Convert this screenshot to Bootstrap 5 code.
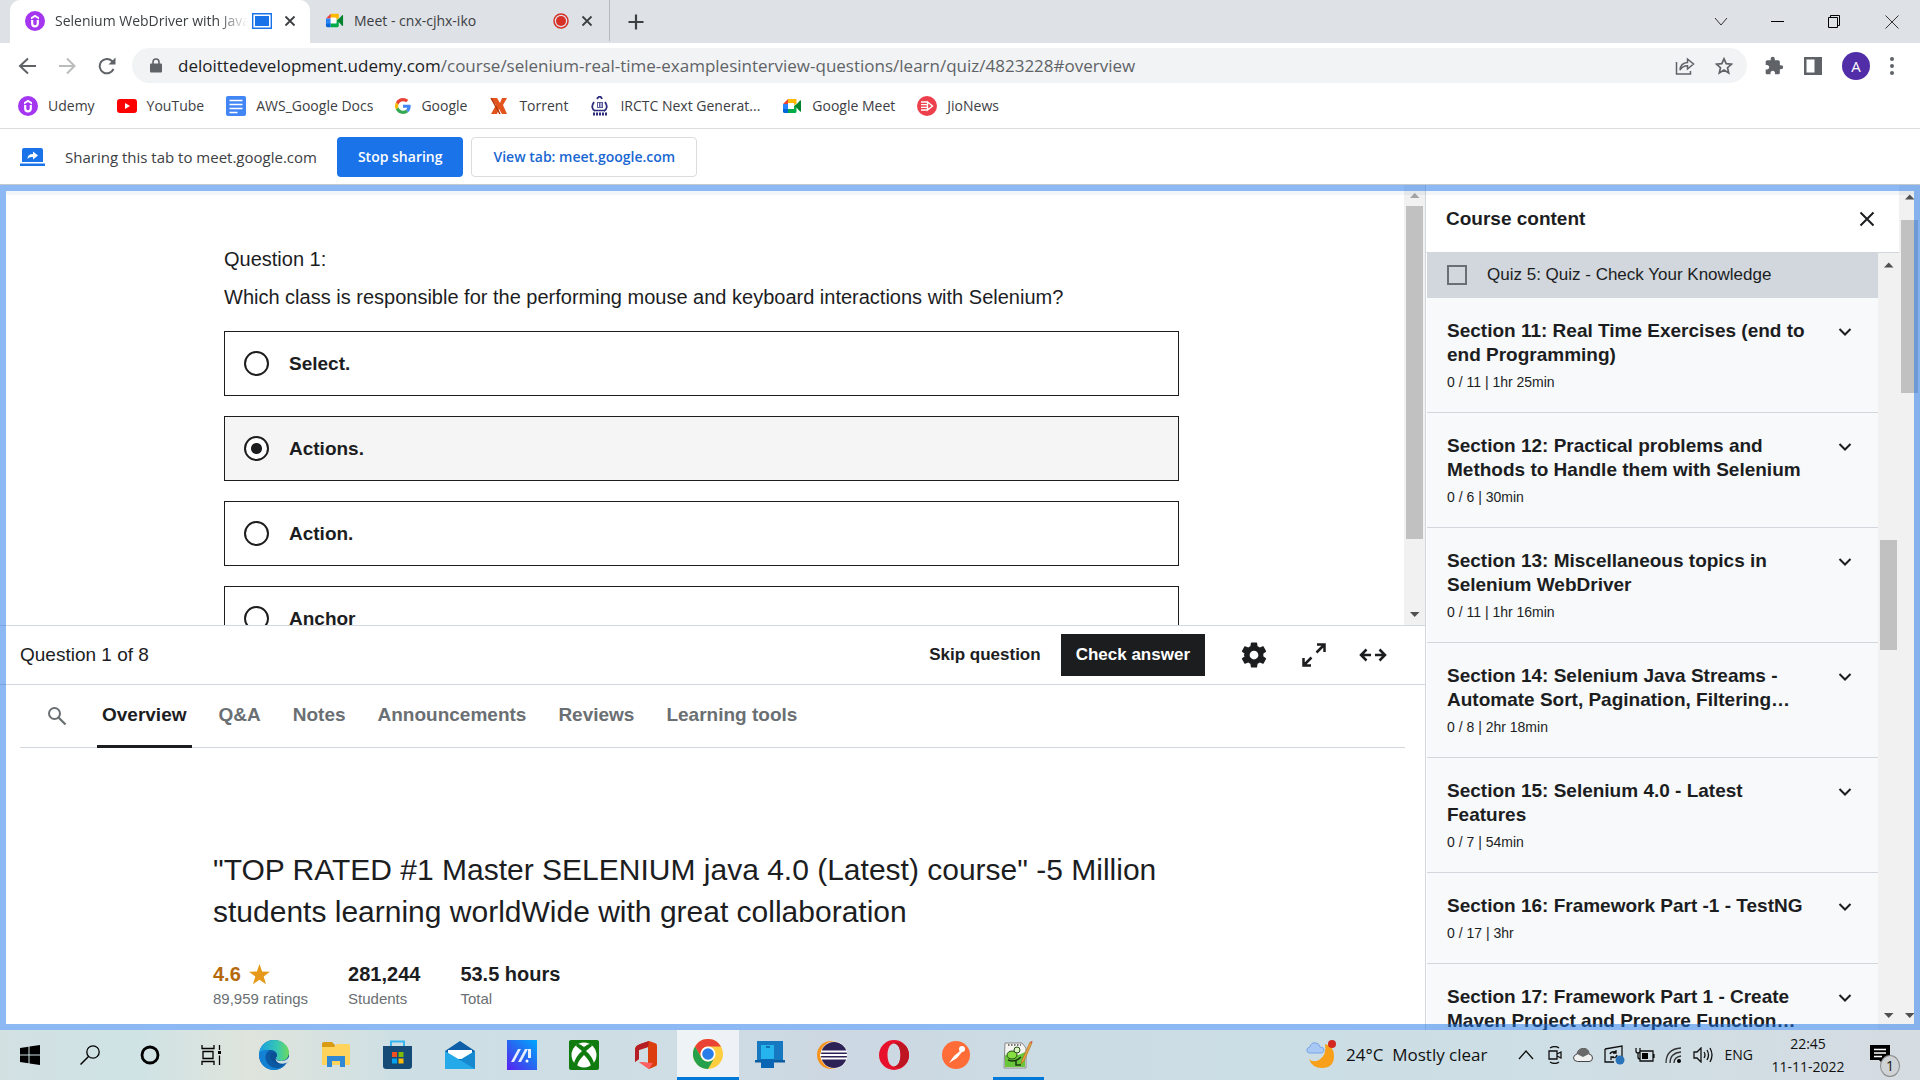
<!DOCTYPE html>
<html lang="en">
<head>
<meta charset="utf-8">
<meta name="viewport" content="width=device-width, initial-scale=1">
<title>Selenium WebDriver with Java</title>
<link href="https://cdn.jsdelivr.net/npm/bootstrap@5.3.0/dist/css/bootstrap.min.css" rel="stylesheet">
<style>
  :root { --ink:#1c1d1f; --rule:#d1d7dc; --ui:"Open Sans","Noto Sans",sans-serif; --page:"Liberation Sans",Arial,sans-serif; }
  body { font-family:var(--ui); font-size:14px; color:#3c4043; line-height:20px; overflow:hidden; }
  svg { display:block; flex-shrink:0; }
  button { border:0; background:none; padding:0; color:inherit; }
  a { color:inherit; text-decoration:none; }

  /* browser chrome */
  .tabstrip { background:#dee1e6; height:43px; }
  .browser-tab { height:43px; padding:0 14px 2px 15px; }
  .browser-tab.current { background:#fff; border-radius:10px 10px 0 0; width:300px; margin-left:10px; }
  .browser-tab.other { width:318px; padding-right:18px; }
  .tab-title { white-space:nowrap; overflow:hidden; margin-left:10px; }
  .tab-title.faded { -webkit-mask-image:linear-gradient(90deg,#000 84%,transparent); mask-image:linear-gradient(90deg,#000 84%,transparent); }
  .win-btn { width:57px; height:38px; display:flex; align-items:center; justify-content:center; }
  .toolbar { height:45px; padding-left:18px; padding-right:26px; }
  .nav-arrows { gap:22px; }
  .omnibox { background:#f1f3f4; border-radius:18px; height:35px; padding:0 14px; margin-right:17px; font-size:17px; color:#202124; }
  .omnibox .path { color:#5f6368; }
  .omni-actions, .ext-actions { gap:20px; }
  .avatar { width:28px; height:28px; border-radius:50%; background:#512da8; color:#fff; font-size:15px; }
  .bookmarks { height:41px; padding-left:18px; gap:22px; padding-bottom:4px; border-bottom:1px solid #dadce0; }
  .bookmarks a { display:flex; align-items:center; gap:10px; }
  .sharebar { height:56px; padding-left:20px; border-bottom:1px solid #c5c8cc; }
  .share-text { font-size:15px; margin:0 20px; }
  .share-btn { height:40px; padding:0 21px; border-radius:4px; font-weight:600; }
  .share-btn.fill { background:#1a73e8; color:#fff; }
  .share-btn.line { border:1px solid #dadce0; color:#1967d2; }

  /* shared page */
  .viewport-area { font-family:var(--page); font-size:19px; line-height:24px; color:var(--ink); background:#fff; }
  .share-frame { inset:0; border:6px solid rgba(26,115,232,.5); box-shadow:inset 0 6px 0 -2px rgba(60,80,120,.06); pointer-events:none; z-index:5; }
  .bar { width:21px; background:#f1f1f1; flex-shrink:0; }
  .thumb { width:17px; background:#c1c1c1; }
  .quiz { height:440px; }
  .quiz-inner { width:955px; margin-left:224px; padding-top:62px; }
  .prompt { font-size:20px; }
  .prompt p { margin:14px 0 22px; }
  .option { height:65px; border:1px solid var(--ink); padding-left:19px; gap:20px; margin-bottom:20px; font-weight:700; flex-shrink:0; }
  .option.picked { background:#f5f5f5; }
  .option input { appearance:none; width:25px; height:25px; border:2px solid var(--ink); border-radius:50%; background:#fff; margin:0; }
  .option input:checked { background:radial-gradient(circle,var(--ink) 5px,#fff 6px); }
  .quizbar { height:60px; border-top:1px solid var(--rule); border-bottom:1px solid var(--rule); padding-left:20px; padding-right:38px; }
  .quizbar button { font-size:17px; font-weight:700; }
  .check-btn { background:var(--ink); color:#fff; height:42px; padding:0 15px; margin:0 26px 0 20px; }
  .course-tabs { margin:0 20px; height:63px; border-bottom:1px solid var(--rule); padding-left:27px; color:#6a6f73; font-weight:700; gap:22px; }
  .course-tabs .tab-link { padding:0 5px; height:63px; display:flex; align-items:center; border-bottom:3px solid transparent; }
  .course-tabs .tab-link.active { color:var(--ink); border-color:var(--ink); }
  .about { margin-left:213px; padding-top:101px; }
  .about h1 { font-size:30px; line-height:42px; font-weight:400; margin-bottom:29px; }
  .stats { gap:40px; }
  .stat-value { font-size:20px; font-weight:700; }
  .stat-label { font-size:15px; color:#6a6f73; line-height:26px; }
  .rating { color:#b4690e; }

  .sidebar { width:474px; border-left:1px solid var(--rule); flex-shrink:0; }
  .side-head { height:68px; padding:0 24px 0 20px; border-bottom:1px solid var(--rule); font-weight:700; }
  .side-list { background:#f7f9fa; overflow:hidden; margin-left:1px; }
  .quiz-row { background:#d1d7dc; height:45px; padding:0 0 2px 20px; font-size:17px; gap:20px; }
  .quiz-row input { appearance:none; width:20px; height:20px; border:2px solid #6a6f73; margin:0; }
  .section-item { padding:21px 26px 19px 20px; border-bottom:1px solid var(--rule); }
  .section-item h2 { font-size:19px; line-height:24px; font-weight:700; margin:0 0 4px; white-space:nowrap; }
  .section-item p { font-size:14px; line-height:22px; margin:0; }

  /* taskbar */
  .taskbar { height:50px; background:linear-gradient(90deg,#d2e0e2 0,#cfe3e5 7%,#dfe4dc 13%,#cddfe4 21%,#cfdde5 35%,#ccd7e2 43%,#cbdce4 55%,#cddfe5 78%,#d5dce2 100%); color:#111; font-size:14px; }
  .tb { width:62px; height:50px; display:flex; align-items:center; justify-content:center; flex-shrink:0; }
  .tb.sys { width:60px; }
  .tb.sys:nth-child(4) { width:63px; }
  .tb.open { background:rgba(255,255,255,.65); border-bottom:3px solid #0078d7; }
  .tb.running { background:linear-gradient(#0078d7,#0078d7) bottom/51px 3px no-repeat; }
  .weather { font-size:17px; margin-right:30px; }
  .tray { gap:10px; }
  .clock { font-size:14px; line-height:23px; width:78px; text-align:center; margin:0 15px 0 16px; }
  .notice { width:38px; margin-right:20px; }
  .notice .count { width:20px; height:22px; border-radius:50%; border:1px solid #888; background:#cfd3d6; right:0; bottom:-12px; line-height:20px; text-align:center; }
</style>
</head>
<body class="vh-100 d-flex flex-column bg-white">
<svg width="0" height="0" class="position-absolute" aria-hidden="true">
  <symbol id="udemy" viewBox="0 0 20 20"><circle cx="10" cy="10" r="10" fill="#a435f0"/><path d="M6 6.200 10 3.800l4 2.400v2.300L10 6 6 8.500z" fill="#fff"/><path d="M7.200 9v3.500c0 3.700 5.600 3.700 5.600 0V9" fill="none" stroke="#fff" stroke-width="2.200"/></symbol>
  <symbol id="meet" viewBox="0 0 20 20"><path d="M6 3h8.500v5L10 10V7H6z" fill="#ffba00"/><path d="M1 8 6 3v5z" fill="#ea4335"/><path d="M1 8h5v5H1z" fill="#2684fc"/><path d="M1 13h5v4H2.500Q1 17 1 15.500z" fill="#0066da"/><path d="M6 13h6v-3l2.500-2v7.500q0 1.500-1.500 1.500H6z" fill="#00ac47"/><path d="m13 10 5-5.500q1-.7 1 .5v10q0 1.200-1 .5z" fill="#00832d"/><path d="M6 7h6v6H6z" fill="#fff"/></symbol>
  <symbol id="close" viewBox="0 0 12 12"><path d="m1.500 1.500 9 9m0-9-9 9" stroke="#3c4043" stroke-width="1.800"/></symbol>
  <symbol id="up" viewBox="0 0 21 21"><path d="M6 13h9.500L10.700 8z" fill="currentColor"/></symbol>
  <symbol id="down" viewBox="0 0 21 21"><path d="M6 8h9.500l-4.800 5z" fill="currentColor"/></symbol>
  <symbol id="chev" viewBox="0 0 14 10"><path d="m1.500 2 5.500 5.500L12.500 2" fill="none" stroke="#1c1d1f" stroke-width="2"/></symbol>
</svg>

<header class="flex-shrink-0">
  <div class="tabstrip d-flex align-items-center">
    <div class="browser-tab current d-flex align-items-center">
      <svg width="20" height="20"><use href="#udemy"/></svg>
      <span class="tab-title faded flex-fill">Selenium WebDriver with Java</span>
      <svg class="ms-1" width="20" height="16"><path d="M.7.700h18.600v14.600H.7z" fill="#fff" stroke="#1a73e8" stroke-width="1.400"/><path d="M3 3h14v10H3z" fill="#1a73e8"/></svg>
      <button class="ms-2 ps-1" aria-label="Close tab"><svg width="12" height="12"><use href="#close"/></svg></button>
    </div>
    <div class="browser-tab other d-flex align-items-center">
      <svg width="19" height="19"><use href="#meet"/></svg>
      <span class="tab-title flex-fill">Meet - cnx-cjhx-iko</span>
      <svg width="16" height="16"><circle cx="8" cy="8" r="7" fill="none" stroke="#d93025" stroke-width="1.500"/><circle cx="8" cy="8" r="5" fill="#d93025"/></svg>
      <button class="ms-2 ps-1 me-2" aria-label="Close tab"><svg width="12" height="12"><use href="#close"/></svg></button>
      <span class="vr ms-2"></span>
    </div>
    <button aria-label="New tab"><svg width="16" height="16"><path d="M8 .5v15M.5 8h15" stroke="#3c4043" stroke-width="2.200"/></svg></button>
    <div class="d-flex ms-auto">
      <button class="win-btn" aria-label="Search tabs"><svg width="14" height="10"><path d="m1 1 6 7 6-7" fill="none" stroke="#333"/></svg></button>
      <button class="win-btn" aria-label="Minimize"><svg width="13" height="3"><path d="M0 1.500h13" stroke="#000"/></svg></button>
      <button class="win-btn" aria-label="Restore"><svg width="15" height="15"><path d="M1.500 3.500h9v10h-9zM3.500 3V1.500h9v10H11" fill="none" stroke="#000"/></svg></button>
      <button class="win-btn" aria-label="Close"><svg width="14" height="14"><path d="m.5.5 13 13m0-13-13 13" stroke="#333"/></svg></button>
    </div>
  </div>
  <div class="toolbar d-flex align-items-center">
    <div class="nav-arrows d-flex">
      <button aria-label="Back"><svg width="19" height="18"><path d="M18 9H2m8-7.500L2 9l8 7.500" fill="none" stroke="#5f6368" stroke-width="2"/></svg></button>
      <button aria-label="Forward"><svg width="17" height="18"><path d="M0 9h15M8 1.500 15.500 9 8 16.500" fill="none" stroke="#babcbe" stroke-width="2"/></svg></button>
      <button aria-label="Reload"><svg width="18" height="18"><path d="M15.500 12A7.200 7.200 0 1 1 14 4l1.500 1.500" fill="none" stroke="#5f6368" stroke-width="2"/><path d="M17.500.5v7h-7z" fill="#5f6368"/></svg></button>
    </div>
    <div class="omnibox d-flex align-items-center flex-fill ms-3">
      <svg class="ms-1" width="12" height="15"><path d="M1 5.500h10q1 0 1 1v7q0 1-1 1H1q-1 0-1-1v-7q0-1 1-1z" fill="#5f6368"/><path d="M3 6V4a3 3 0 0 1 6 0v2" fill="none" stroke="#5f6368" stroke-width="1.600"/></svg>
      <span class="ms-3 flex-fill text-nowrap">deloittedevelopment.udemy.com<span class="path">/course/selenium-real-time-examplesinterview-questions/learn/quiz/4823228#overview</span></span>
      <div class="omni-actions d-flex">
        <button aria-label="Share"><svg width="20" height="18"><path d="M1.500 5v12h14v-3" fill="none" stroke="#5f6368" stroke-width="1.500"/><path d="M5 13q.5-7 7.500-7.500V2l6 5-6 5V8.800Q7.500 9 5 13z" fill="none" stroke="#5f6368" stroke-width="1.500"/></svg></button>
        <button aria-label="Bookmark"><svg width="18" height="18" viewBox="0 0 18 18"><path d="m9 1.800 2.200 4.900 5.300.5-4 3.500 1.200 5.200L9 13.100l-4.700 2.800 1.200-5.200-4-3.500 5.300-.5z" fill="none" stroke="#5f6368" stroke-width="1.700"/></svg></button>
      </div>
    </div>
    <div class="ext-actions d-flex align-items-center">
      <button aria-label="Extensions"><svg width="20" height="20" viewBox="0 0 24 24"><path fill="#5f6368" d="M20.500 11H19V7c0-1.100-.9-2-2-2h-4V3.500a2.500 2.500 0 0 0-5 0V5H4c-1.100 0-2 .9-2 2v3.800h1.500c1.500 0 2.700 1.200 2.700 2.700S5 16.200 3.500 16.200H2V20c0 1.100.9 2 2 2h3.800v-1.500c0-1.500 1.200-2.700 2.700-2.700s2.700 1.200 2.700 2.700V22H17c1.100 0 2-.9 2-2v-4h1.500a2.500 2.500 0 0 0 0-5z"/></svg></button>
      <button aria-label="Side panel"><svg width="18" height="18"><path d="M0 0h18v18H0zM2.500 2.500v13h8v-13z" fill="#5f6368" fill-rule="evenodd"/></svg></button>
      <button class="avatar" aria-label="Profile">A</button>
      <button aria-label="Menu"><svg width="4" height="18"><circle cx="2" cy="2" r="2" fill="#5f6368"/><circle cx="2" cy="9" r="2" fill="#5f6368"/><circle cx="2" cy="16" r="2" fill="#5f6368"/></svg></button>
    </div>
  </div>
  <nav class="bookmarks d-flex align-items-center text-nowrap">
    <a href="#"><svg width="20" height="20"><use href="#udemy"/></svg>Udemy</a>
    <a href="#"><svg width="20" height="20"><rect y="3" width="20" height="14" rx="3" fill="red"/><path d="m8 7 5 3-5 3z" fill="#fff"/></svg>YouTube</a>
    <a href="#"><svg width="20" height="20"><rect width="20" height="20" rx="2" fill="#4285f4"/><path d="M3.500 4.500h13m-13 4h13m-13 4h13m-13 4h8" stroke="#fff" stroke-width="1.700"/></svg>AWS_Google Docs</a>
    <a href="#"><svg width="16" height="16" viewBox="0 0 48 48"><path fill="#ea4335" d="M24 9.500c3.500 0 6.700 1.200 9.200 3.600l6.900-6.900C35.900 2.400 30.500 0 24 0 14.600 0 6.500 5.400 2.600 13.200l8 6.200C12.400 13.700 17.700 9.500 24 9.500z"/><path fill="#4285f4" d="M47 24.500c0-1.600-.2-3.100-.4-4.500H24v9h12.900c-.6 3-2.300 5.500-4.800 7.200l7.700 6C44.400 38 47 31.800 47 24.500z"/><path fill="#fbbc05" d="M10.500 28.600a14.500 14.500 0 0 1 0-9.200l-8-6.200a24 24 0 0 0 0 21.600z"/><path fill="#34a853" d="M24 48c6.500 0 12-2.100 15.900-5.800l-7.700-6c-2.200 1.500-4.900 2.300-8.200 2.300-6.300 0-11.600-4.200-13.500-9.900l-8 6.200C6.500 42.600 14.600 48 24 48z"/></svg>Google</a>
    <a href="#"><svg width="20" height="18"><path d="M2 1h6l3 5 2-5h5l-4 7 4 9h-5l-3-5-2 5H2l5-9z" fill="#e2541b"/><path d="m2 1 9 16" stroke="#b33508" stroke-width="1.500"/></svg>Torrent</a>
    <a href="#"><svg width="20" height="20"><path d="M7 3q3-5 5 0M4 6q-4 6 1 9m10-9q4 6-1 9" fill="none" stroke="#2b2b7d" stroke-width="1.800"/><path d="M7 6h6v6H7z" fill="#5b5ba0"/><path d="M8.500 7v4m2.500-4v4" stroke="#fff"/><path d="M5 14.500h10" stroke="#2b2b7d" stroke-width="1.500"/><path d="M3 18h15" stroke="#2b2b7d" stroke-width="3" stroke-dasharray="2 1"/></svg>IRCTC Next Generat...</a>
    <a href="#"><svg width="20" height="20"><use href="#meet"/></svg>Google Meet</a>
    <a href="#"><svg width="20" height="20"><circle cx="10" cy="10" r="10" fill="#ee404c"/><path d="M4 6h6M4 8.600h6M4 11.300h6M4 14h6" stroke="#fff" stroke-width="1.300"/><path d="m10.500 6 5 4-5 4z" fill="none" stroke="#fff" stroke-width="1.400"/></svg>JioNews</a>
  </nav>
  <div class="sharebar d-flex align-items-center">
    <svg width="25" height="18"><path d="M4 0h17q2 0 2 2v12H2V2q0-2 2-2z" fill="#1a73e8"/><path d="M0 15.500h25V18H0z" fill="#1a73e8"/><path d="M7.500 11q0-5 5.500-5V3.500L18 7.500l-5 4V9q-4-.5-5.500 2z" fill="#fff"/></svg>
    <span class="share-text">Sharing this tab to meet.google.com</span>
    <button class="share-btn fill">Stop sharing</button>
    <button class="share-btn line ms-2">View tab: meet.google.com</button>
  </div>
</header>

<main class="viewport-area d-flex flex-fill position-relative overflow-hidden">
  <div class="flex-fill d-flex flex-column overflow-hidden">
    <div class="quiz d-flex overflow-hidden flex-shrink-0">
      <form class="flex-fill overflow-hidden">
        <div class="quiz-inner">
          <div class="prompt text-nowrap">
            <div>Question 1:</div>
            <p>Which class is responsible for the performing mouse and keyboard interactions with Selenium?</p>
          </div>
          <label class="option d-flex align-items-center"><input type="radio" name="answer">Select.</label>
          <label class="option picked d-flex align-items-center"><input type="radio" name="answer" checked>Actions.</label>
          <label class="option d-flex align-items-center"><input type="radio" name="answer">Action.</label>
          <label class="option d-flex align-items-center"><input type="radio" name="answer">Anchor</label>
        </div>
      </form>
      <div class="bar d-flex flex-column align-items-center">
        <svg width="21" height="21" color="#a3a3a3"><use href="#up"/></svg>
        <div class="thumb" style="flex-grow:333"></div><div style="flex-grow:65"></div>
        <svg width="21" height="21" color="#505050"><use href="#down"/></svg>
      </div>
    </div>
    <div class="quizbar d-flex align-items-center flex-shrink-0">
      <span class="me-auto">Question 1 of 8</span>
      <button>Skip question</button>
      <button class="check-btn">Check answer</button>
      <button class="ms-2 me-4" aria-label="Settings"><svg width="30" height="30" viewBox="0 0 24 24"><path fill="#1c1d1f" d="M19.430 12.980c.040-.32.070-.64.070-.98s-.03-.66-.07-.98l2.110-1.650c.19-.15.240-.42.120-.64l-2-3.460c-.12-.22-.39-.3-.61-.22l-2.490 1c-.52-.4-1.080-.73-1.690-.98l-.38-2.650A.49.490 0 0 0 14 2h-4c-.25 0-.46.180-.49.420l-.38 2.650c-.61.250-1.170.590-1.690.98l-2.490-1c-.23-.09-.49 0-.61.220l-2 3.460c-.13.220-.07.490.12.640l2.110 1.650c-.4.320-.7.650-.7.980s.3.660.7.980l-2.110 1.650c-.19.150-.24.420-.12.640l2 3.460c.12.220.39.300.61.220l2.490-1c.52.400 1.080.730 1.690.98l.38 2.650c.3.240.24.420.49.420h4c.25 0 .46-.18.490-.42l.38-2.650c.61-.25 1.170-.59 1.690-.98l2.490 1c.23.090.49 0 .61-.22l2-3.460c.12-.22.070-.49-.12-.64zM12 15.500a3.500 3.500 0 1 1 0-7 3.500 3.500 0 0 1 0 7z"/></svg></button>
      <button class="ms-2 me-4" aria-label="Fullscreen"><svg width="26" height="26"><path d="M15.500 10.500 23 3m-7-.500h7.500V10M10.500 15.500 3 23m-.500-7v7.500H10" fill="none" stroke="#1c1d1f" stroke-width="2.500"/></svg></button>
      <button class="ms-2" aria-label="Expanded view"><svg width="28" height="14"><path d="M12 7H2m5.500-5.500L2 7l5.500 5.500M16 7h10m-5.500-5.500L26 7l-5.500 5.500" fill="none" stroke="#1c1d1f" stroke-width="2.500"/></svg></button>
    </div>
    <nav class="course-tabs d-flex flex-shrink-0">
      <button class="me-1 pe-1" aria-label="Search"><svg width="20" height="20"><circle cx="7.500" cy="7.500" r="5.500" fill="none" stroke="#6a6f73" stroke-width="2"/><path d="m11.500 11.500 7 7" stroke="#6a6f73" stroke-width="2.300"/></svg></button>
      <a class="tab-link active" href="#">Overview</a>
      <a class="tab-link" href="#">Q&amp;A</a>
      <a class="tab-link" href="#">Notes</a>
      <a class="tab-link" href="#">Announcements</a>
      <a class="tab-link" href="#">Reviews</a>
      <a class="tab-link" href="#">Learning tools</a>
    </nav>
    <section class="about">
      <h1>"TOP RATED #1 Master SELENIUM java 4.0 (Latest) course" -5 Million<br>students learning worldWide with great collaboration</h1>
      <div class="stats d-flex">
        <div><div class="stat-value rating d-flex align-items-center">4.6 <svg class="ms-2" width="21" height="21" viewBox="0 0 21 21"><path d="m10.500 0 2.600 7.500 7.900.2-6.300 4.800L17 20.300l-6.500-4.600L4 20.300l2.300-7.800L0 7.700l7.900-.2z" fill="#e59819"/></svg></div><div class="stat-label">89,959 ratings</div></div>
        <div><div class="stat-value">281,244</div><div class="stat-label">Students</div></div>
        <div><div class="stat-value">53.5 hours</div><div class="stat-label">Total</div></div>
      </div>
    </section>
  </div>

  <aside class="sidebar d-flex flex-column">
    <div class="side-head d-flex align-items-center justify-content-between flex-shrink-0">
      <span>Course content</span>
      <button aria-label="Close course content"><svg width="16" height="16"><path d="m1.500 1.500 13 13m0-13-13 13" stroke="#1c1d1f" stroke-width="2"/></svg></button>
    </div>
    <div class="d-flex flex-fill overflow-hidden">
      <div class="side-list flex-fill">
        <label class="quiz-row d-flex align-items-center"><input type="checkbox">Quiz 5: Quiz - Check Your Knowledge</label>
        <div class="section-item d-flex justify-content-between"><div><h2>Section 11: Real Time Exercises (end to<br>end Programming)</h2><p>0 / 11 | 1hr 25min</p></div><svg class="mt-2" width="14" height="10"><use href="#chev"/></svg></div>
        <div class="section-item d-flex justify-content-between"><div><h2>Section 12: Practical problems and<br>Methods to Handle them with Selenium</h2><p>0 / 6 | 30min</p></div><svg class="mt-2" width="14" height="10"><use href="#chev"/></svg></div>
        <div class="section-item d-flex justify-content-between"><div><h2>Section 13: Miscellaneous topics in<br>Selenium WebDriver</h2><p>0 / 11 | 1hr 16min</p></div><svg class="mt-2" width="14" height="10"><use href="#chev"/></svg></div>
        <div class="section-item d-flex justify-content-between"><div><h2>Section 14: Selenium Java Streams -<br>Automate Sort, Pagination, Filtering…</h2><p>0 / 8 | 2hr 18min</p></div><svg class="mt-2" width="14" height="10"><use href="#chev"/></svg></div>
        <div class="section-item d-flex justify-content-between"><div><h2>Section 15: Selenium 4.0 - Latest<br>Features</h2><p>0 / 7 | 54min</p></div><svg class="mt-2" width="14" height="10"><use href="#chev"/></svg></div>
        <div class="section-item d-flex justify-content-between"><div><h2>Section 16: Framework Part -1 - TestNG</h2><p>0 / 17 | 3hr</p></div><svg class="mt-2" width="14" height="10"><use href="#chev"/></svg></div>
        <div class="section-item d-flex justify-content-between"><div><h2>Section 17: Framework Part 1 - Create<br>Maven Project and Prepare Function…</h2></div><svg class="mt-2" width="14" height="10"><use href="#chev"/></svg></div>
      </div>
      <div class="bar d-flex flex-column align-items-center pb-1">
        <svg width="21" height="24" color="#505050"><use href="#up"/></svg>
        <div style="flex-grow:262"></div><div class="thumb" style="flex-grow:110"></div><div style="flex-grow:354"></div>
        <svg width="21" height="21" color="#505050"><use href="#down"/></svg>
      </div>
    </div>
  </aside>
  <div class="bar d-flex flex-column align-items-center pb-1">
    <svg width="21" height="24" color="#505050"><use href="#up"/></svg>
    <div style="flex-grow:11"></div><div class="thumb" style="flex-grow:173"></div><div style="flex-grow:612"></div>
    <svg width="21" height="21" color="#505050"><use href="#down"/></svg>
  </div>
  <div class="share-frame position-absolute"></div>
</main>

<footer class="taskbar d-flex align-items-center flex-shrink-0">
  <button class="tb sys" aria-label="Start"><svg width="20" height="20"><path d="m0 3 8.500-1.200v7.700H0zM9.500 1.600 20 0v9.500H9.500zM0 10.500h8.500v7.700L0 17zM9.500 10.500H20V20L9.500 18.400z"/></svg></button>
  <button class="tb sys" aria-label="Search"><svg width="20" height="20"><circle cx="13" cy="7" r="6.200" fill="none" stroke="#000" stroke-width="1.300"/><path d="M8.500 11.500.5 19.500" stroke="#000" stroke-width="1.500"/></svg></button>
  <button class="tb sys" aria-label="Cortana"><svg width="20" height="20"><circle cx="10" cy="10" r="8" fill="none" stroke="#000" stroke-width="2.800"/></svg></button>
  <button class="tb sys" aria-label="Task view"><svg width="21" height="20"><path d="M1 0v3.500h12V0M2 6.500h10v7H2zM1 20v-3.500h12V20M18.500 0v5m0 5.500V20" fill="none" stroke="#000" stroke-width="1.300"/><path d="M17 6h3v3h-3z"/></svg></button>
  <button class="tb" aria-label="Edge"><svg width="30" height="30" viewBox="0 0 30 30"><defs><linearGradient id="eg" x2="1"><stop stop-color="#1b9de2"/><stop offset=".6" stop-color="#35c6b4"/><stop offset="1" stop-color="#6ddb5c"/></linearGradient></defs><circle cx="15" cy="15" r="15" fill="#0c59a4"/><path d="M0 14C1 5 7 0 15 0c9 0 15 6 15 13 0 5-4 8-8 8-3 0-5-1-5-3 0-1 1-1.500 1-3 0-3-3-5-7-5-5 0-9 1-11 4z" fill="url(#eg)"/><path d="M0 14c2-4 7-5 11-4-5 2-6 9-2 14s12 6 17 0c-3 5-8 6-11 6C6 30 0 23 0 14z" fill="#1482d4"/><path d="M12 13c-3 6 3 12 11 11 3-.5 4-2 5-3l1 2 1-9c-1 5-4 7-8 7-3 0-5-1-5-3 0-1 1-1.500 1-3-1-3-4-3-6-2z" fill="#0b4f95"/><path d="M17.300 17c-1 3 1.500 4 4.700 4 3 0 6-1 8-4v5l-3 1c-6 2-12-1-9.700-6z" fill="#cddfe4"/></svg></button>
  <button class="tb" aria-label="File Explorer"><svg width="28" height="26"><path d="M0 2q0-2 2-2h8l3 3v4H0z" fill="#d99b13"/><path d="M0 5h12l3-3h11q2 0 2 2v19H0z" fill="#ffd35c"/><path d="M5 25V14h18v11h-5v-6h-8v6z" fill="#2f88d3"/></svg></button>
  <button class="tb" aria-label="Store"><svg width="30" height="30"><path d="M8 7V1.500h13V7" fill="none" stroke="#36b5f0" stroke-width="2"/><path d="M0 6h29v20q0 3-3 3H3q-3 0-3-3z" fill="#164b78"/><path d="M9 12h5v5H9z" fill="#f25022"/><path d="M15.500 12h5v5h-5z" fill="#7fba00"/><path d="M9 18.500h5v5H9z" fill="#00a4ef"/><path d="M15.500 18.500h5v5h-5z" fill="#ffb900"/></svg></button>
  <button class="tb" aria-label="Mail"><svg width="30" height="28"><path d="M0 10 15 0l15 10v18H0z" fill="#0f5fa8"/><path d="M3 9h24v9H3z" fill="#fff"/><path d="m0 10 15 9 15-9v18H0z" fill="#25a9e8"/><path d="m15 19 15 9V10z" fill="#1689d0"/></svg></button>
  <button class="tb" aria-label="MyASUS"><svg width="30" height="30"><defs><linearGradient id="as" x1="0" y1="1" x2="1" y2="0"><stop stop-color="#5a20f2"/><stop offset=".5" stop-color="#2767f0"/><stop offset="1" stop-color="#00a8ff"/></linearGradient></defs><path d="M0 0h30v30H0z" fill="url(#as)"/><path d="M4 22 11 9h3L7 22zM11 22l7-13h3l-7 13zM21 9h3v9h-3z" fill="#e6edff"/><circle cx="20" cy="21" r="1.500" fill="#fff"/></svg></button>
  <button class="tb" aria-label="Xbox"><svg width="30" height="30"><rect width="30" height="30" rx="2" fill="#107c10"/><circle cx="15" cy="15" r="12.500" fill="#fff"/><path d="M8 3.500q4 .5 7 3.500 3-3 7-3.500l1 2.500-6 5q7 6 8 13l-3 2q-1-5-7-11-6 6-7 11l-3-2q1-7 8-13L7 6z" fill="#107c10"/></svg></button>
  <button class="tb" aria-label="Office"><svg width="24" height="28"><path d="M15 0 4 4Q1 5 1 9v12l4-3V9l9-3v16l-9-1 10 7 7-3q1-.5 1-2V5q0-2-1-2.500z" fill="#dc3e0d"/><path d="m15 0-9 3Q1 5 1 9v12l4-3V9l9-3z" fill="#b51e24"/><path d="m5 21 10 7 4-6z" fill="#ff5f62"/></svg></button>
  <button class="tb open" aria-label="Chrome"><svg width="30" height="30" viewBox="0 0 30 30"><circle cx="15" cy="15" r="15" fill="#ffcd40"/><path d="M2 7.500a15 15 0 0 1 26 0H15a7.500 7.500 0 0 0-6.500 11.200z" fill="#ea4335"/><path d="M2 7.500a15 15 0 0 0 13 22.500l6.500-11.200a7.500 7.500 0 0 1-13 0z" fill="#25a04b"/><circle cx="15" cy="15" r="7.500" fill="#fff"/><circle cx="15" cy="15" r="5.800" fill="#2a7de9"/></svg></button>
  <button class="tb" aria-label="Your Phone"><svg width="30" height="28"><path d="M2 0h26v20H2z" fill="#1778c2"/><path d="M0 19h30v2.500H0z" fill="#0b5ca0"/><path d="M6 4h13v21q0 2-2 2H8q-2 0-2-2z" fill="#26b4ec"/><path d="M6 18h13v9H6z" fill="#0a66b5"/><path d="M11 6h4" stroke="#0b5ca0" stroke-width="1.500"/></svg></button>
  <button class="tb" aria-label="Eclipse"><svg width="30" height="28"><circle cx="14" cy="14" r="14" fill="#f7941e"/><circle cx="17" cy="14" r="13.500" fill="#fff"/><circle cx="17" cy="14" r="13" fill="#2c2255"/><path d="M4 10.500h26M3 14h27M4 17.500h26" stroke="#fff" stroke-width="1.800"/></svg></button>
  <button class="tb" aria-label="Opera"><svg width="30" height="30"><path d="M15 0a15 15 0 0 0 0 30 15 15 0 0 0 0-30zm0 3.500c4 0 6.500 5 6.500 11.500S19 26.500 15 26.500 8.500 21.500 8.500 15 11 3.500 15 3.500z" fill="#e8112d" fill-rule="evenodd"/><path d="M15 3.500c4-3 15 0 15 11.500S19 29.500 15 26.500c4 0 6.500-5 6.500-11.500S19 3.500 15 3.500z" fill="#bd1521"/></svg></button>
  <button class="tb" aria-label="Postman"><svg width="28" height="28"><circle cx="14" cy="14" r="14" fill="#ff6c37"/><path d="m7 22 5-7 6-5 2 1-5 6z" fill="#fff"/><circle cx="20" cy="8" r="3" fill="#fff"/></svg></button>
  <button class="tb running" aria-label="Notepad++"><svg width="30" height="28"><path d="M2 2h17l4 5v20H1z" fill="#f4f4f0" stroke="#888"/><path d="M2 14q10 3 20-3v15H2z" fill="#69c53a"/><path d="M5 4h13" stroke="#777" stroke-dasharray="1.500 1.500" stroke-width="2"/><ellipse cx="9" cy="14" rx="5" ry="4" fill="#86df40" stroke="#234b16"/><circle cx="14" cy="9" r="3" fill="#d9f5c0" stroke="#234b16"/><path d="M5 19q7 3 13-3M13 19v5h5" fill="none" stroke="#193b10" stroke-width="1.500"/><path d="m18 23 1-4L27 1l2 1-8 18z" fill="#eba13d" stroke="#9b6113" stroke-width=".5"/><path d="m27 1 2 1 .5-2z" fill="#d33"/></svg></button>

  <button class="weather d-flex align-items-center ms-auto text-nowrap"><svg width="32" height="30" class="me-2"><path d="M19 4q9 2 9 12 0 12-12 12Q6 28 3 19q4 4 10 1Q21 15 19 4z" fill="#f9a01b"/><path d="M3 13q-3-1-2-4 1-2 3-2 1-5 6-4 3 0 4 4 4 0 4 3 0 2-2 3z" fill="#a9c9f5" stroke="#7aa5e6"/><circle cx="26" cy="4" r="4" fill="#d3281f"/></svg>24°C&nbsp; Mostly clear</button>
  <div class="tray d-flex align-items-center">
    <button class="me-1" aria-label="Hidden icons"><svg width="16" height="12"><path d="m1 10 7-8 7 8" fill="none" stroke="#111" stroke-width="1.300"/></svg></button>
    <svg width="15" height="18"><path d="M1 5h8v8H1zM9 8l4-2v6l-4-2M2 2q5-3 9 0M2 16q5 3 9 0" fill="none" stroke="#111" stroke-width="1.300"/></svg>
    <svg width="20" height="16"><path d="M4.500 14.500Q.5 14 .5 11t3.500-4q1-5.500 6.500-5.500T16 7q3.500.5 3.500 4t-3.500 3.500z" fill="#f2f2f2" stroke="#444"/><path d="M4 7q1.500-5.500 6.500-5.500T16 7l-6 3z" fill="#6a6a6a"/></svg>
    <svg width="22" height="20"><path d="m2 4 17-3v14M2 4v13h9" fill="none" stroke="#111" stroke-width="1.300"/><path d="M7 9q1-3 6-2m0-2v3h-3M14 10q-1 4-6 2m0 3v-3h3" fill="none" stroke="#111" stroke-width="1.300"/><circle cx="17" cy="15" r="4.500" fill="#2b73b8"/></svg>
    <svg width="20" height="16"><path d="M5 4h13v10H5zM19 7v4M1 1v3q0 2 2 2t2-2V1M3 6v4q0 2 2 2" fill="none" stroke="#111" stroke-width="1.300"/><path d="M7 6h6v6H7z"/></svg>
    <svg width="18" height="18"><path d="M1 17Q1 3 16 2M5 17Q5 7 16 6M9 17q0-6 7-7" fill="none" stroke="#333" stroke-width="1.300"/><circle cx="14" cy="15" r="2"/></svg>
    <svg width="22" height="16"><path d="M1 5h3l4-4v14l-4-4H1zM11 5q2 3 0 6M14 3q3 5 0 10M17 1q4 7 0 14" fill="none" stroke="#111" stroke-width="1.300"/></svg>
    <span>ENG</span>
  </div>
  <div class="clock text-nowrap">22:45<br>11-11-2022</div>
  <button class="notice position-relative" aria-label="Notifications"><svg class="ms-2" width="20" height="20"><path d="M0 0h20v15h-6v5l-5-5H0z"/><path d="M4 4.500h12M4 8h12M4 11.500h8" stroke="#fff" stroke-width="1.300"/></svg><span class="count position-absolute">1</span></button>
</footer>
<script src="https://cdn.jsdelivr.net/npm/bootstrap@5.3.0/dist/js/bootstrap.bundle.min.js"></script>
</body>
</html>
